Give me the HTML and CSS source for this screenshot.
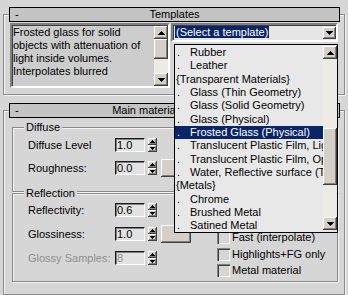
FILE: index.html
```html
<!DOCTYPE html>
<html lang="en">
<head>
<meta charset="utf-8">
<title>Templates</title>
<link rel="stylesheet" href="styles.css">
</head>
<body>
<div class="panel">
  <section class="rollout rollout-templates">
    <div class="rtitle"><span class="rminus">-</span><span class="rname">Templates</span><span></span></div>
    <div class="tpl-row">
      <div class="desc">
        <div class="desc-text">Frosted glass for solid<br>objects with attenuation of<br>light inside volumes.<br>Interpolates blurred</div>
        <div class="vscroll small">
          <div class="sbtn"><svg width="7" height="4" viewBox="0 0 7 4"><path d="M0 4H7V3H6V2H5V1H4V0H3V1H2V2H1V3H0Z"/></svg></div>
          <div class="sthumb thumb-small"></div>
          <div class="strack grow"></div>
          <div class="sbtn"><svg width="7" height="4" viewBox="0 0 7 4"><path d="M0 0H7V1H6V2H5V3H4V4H3V3H2V2H1V1H0Z"/></svg></div>
        </div>
      </div>
      <div class="combo">
        <span class="combo-sel">(Select a template)</span>
        <div class="cbtn"><svg width="7" height="4" viewBox="0 0 7 4"><path d="M0 0H7V1H6V2H5V3H4V4H3V3H2V2H1V1H0Z"/></svg></div>
        <div class="dropdown">
          <div class="dd-items">
            <div class="dd-item"><span class="dot">.</span>Rubber</div>
            <div class="dd-item"><span class="dot">.</span>Leather</div>
            <div class="dd-item cat">{Transparent Materials}</div>
            <div class="dd-item"><span class="dot">.</span>Glass (Thin Geometry)</div>
            <div class="dd-item"><span class="dot">.</span>Glass (Solid Geometry)</div>
            <div class="dd-item"><span class="dot">.</span>Glass (Physical)</div>
            <div class="dd-item sel"><span class="dot">.</span>Frosted Glass (Physical)</div>
            <div class="dd-item"><span class="dot">.</span>Translucent Plastic Film, Light Diffusion</div>
            <div class="dd-item"><span class="dot">.</span>Translucent Plastic Film, Opalescent</div>
            <div class="dd-item"><span class="dot">.</span>Water, Reflective surface (Thin geometry)</div>
            <div class="dd-item cat">{Metals}</div>
            <div class="dd-item"><span class="dot">.</span>Chrome</div>
            <div class="dd-item"><span class="dot">.</span>Brushed Metal</div>
            <div class="dd-item"><span class="dot">.</span>Satined Metal</div>
          </div>
          <div class="vscroll big">
            <div class="sbtn"><svg width="7" height="4" viewBox="0 0 7 4"><path d="M0 4H7V3H6V2H5V1H4V0H3V1H2V2H1V3H0Z"/></svg></div>
            <div class="strack track-top"></div>
            <div class="sthumb thumb-big"></div>
            <div class="strack grow"></div>
            <div class="sbtn"><svg width="7" height="4" viewBox="0 0 7 4"><path d="M0 0H7V1H6V2H5V3H4V4H3V3H2V2H1V1H0Z"/></svg></div>
          </div>
        </div>
      </div>
    </div>
  </section>

  <section class="rollout rollout-main">
    <div class="rtitle"><span class="rminus">-</span><span class="rname">Main material parameters</span><span></span></div>

    <div class="group group-diffuse">
      <div class="legend">Diffuse</div>
      <div class="prow first">
        <span class="plabel">Diffuse Level</span>
        <span class="pfield">1.0</span>
        <span class="parrows">
          <span class="sa"><svg width="5" height="3" viewBox="0 0 5 3"><path d="M0 3H5V2H4V1H3V0H2V1H1V2H0Z"/></svg></span>
          <span class="sa"><svg width="5" height="3" viewBox="0 0 5 3"><path d="M0 0H5V1H4V2H3V3H2V2H1V1H0Z"/></svg></span>
        </span>
      </div>
      <div class="prow">
        <span class="plabel">Roughness:</span>
        <span class="pfield">0.0</span>
        <span class="parrows">
          <span class="sa"><svg width="5" height="3" viewBox="0 0 5 3"><path d="M0 3H5V2H4V1H3V0H2V1H1V2H0Z"/></svg></span>
          <span class="sa"><svg width="5" height="3" viewBox="0 0 5 3"><path d="M0 0H5V1H4V2H3V3H2V2H1V1H0Z"/></svg></span>
        </span>
        <span class="pmap"></span>
      </div>
    </div>

    <div class="group group-reflection">
      <div class="legend">Reflection</div>
      <div class="gcols">
        <div class="gcol-left">
          <div class="prow first">
            <span class="plabel">Reflectivity:</span>
            <span class="pfield">0.6</span>
            <span class="parrows">
              <span class="sa"><svg width="5" height="3" viewBox="0 0 5 3"><path d="M0 3H5V2H4V1H3V0H2V1H1V2H0Z"/></svg></span>
              <span class="sa"><svg width="5" height="3" viewBox="0 0 5 3"><path d="M0 0H5V1H4V2H3V3H2V2H1V1H0Z"/></svg></span>
            </span>
          </div>
          <div class="prow">
            <span class="plabel">Glossiness:</span>
            <span class="pfield">1.0</span>
            <span class="parrows">
              <span class="sa"><svg width="5" height="3" viewBox="0 0 5 3"><path d="M0 3H5V2H4V1H3V0H2V1H1V2H0Z"/></svg></span>
              <span class="sa"><svg width="5" height="3" viewBox="0 0 5 3"><path d="M0 0H5V1H4V2H3V3H2V2H1V1H0Z"/></svg></span>
            </span>
            <span class="pmap"></span>
          </div>
          <div class="prow disabled">
            <span class="plabel">Glossy Samples:</span>
            <span class="pfield">8</span>
            <span class="parrows">
              <span class="sa"><svg width="5" height="3" viewBox="0 0 5 3"><path d="M0 3H5V2H4V1H3V0H2V1H1V2H0Z"/></svg></span>
              <span class="sa"><svg width="5" height="3" viewBox="0 0 5 3"><path d="M0 0H5V1H4V2H3V3H2V2H1V1H0Z"/></svg></span>
            </span>
          </div>
        </div>
        <div class="gcol-right">
          <div class="chk"><span class="box"></span>Fast (interpolate)</div>
          <div class="chk"><span class="box"></span>Highlights+FG only</div>
          <div class="chk"><span class="box"></span>Metal material</div>
        </div>
      </div>
    </div>
  </section>
</div>
</body>
</html>
```

FILE: styles.css
```css
* { box-sizing: border-box; }
html, body { margin: 0; padding: 0; }
body {
  width: 348px;
  height: 295px;
  overflow: hidden;
  background: #d6d6d6;
  font-family: "Liberation Sans", Arial, sans-serif;
  font-size: 11px;
  line-height: 13px;
  color: #000;
}
svg { display: block; shape-rendering: crispEdges; }
svg path { fill: #000; }

.panel { padding: 14px 3px 0 3px; }

.rollout {
  border: 1px solid #8a8a8a;
  box-shadow: inset 1px 1px 0 #f5f5f5, 1px 1px 0 #f5f5f5;
}
.rollout-templates { padding-bottom: 6px; }
.rollout-main { margin-top: 15px; padding-bottom: 12px; }

.rtitle {
  display: grid;
  grid-template-columns: 1fr auto 1fr;
  height: 15px;
  margin: -8px 4px 0 5px;
  padding: 0 5px;
  border: 1px solid #000;
  background: #c4c4c4;
  line-height: 13px;
}
.rminus { justify-self: start; }

/* Templates row */
.tpl-row {
  display: flex;
  align-items: flex-start;
  gap: 1px;
  margin-top: 1px;
  padding-left: 6px;
}
.desc {
  display: flex;
  width: 160px;
  height: 65px;
  border: 2px solid;
  border-color: #808080 #fff #fff #808080;
  box-shadow: inset 1px 1px 0 #404040;
  background: #cdcdcd;
}
.desc-text {
  flex: 1;
  padding: 1px 0 0 1px;
  line-height: 13px;
  overflow: hidden;
  white-space: nowrap;
}

.vscroll {
  display: flex;
  flex-direction: column;
  width: 14px;
}
.vscroll.small { padding-top: 1px; }
.vscroll.big { padding: 1px 0 2px 0; }
.sbtn, .sthumb, .sa, .pmap, .cbtn {
  background: #d4d0c8;
  box-shadow: inset -1px -1px 0 #404040, inset 1px 1px 0 #fff, inset -2px -2px 0 #808080;
}
.sbtn {
  height: 13px;
  display: flex;
  align-items: center;
  justify-content: center;
  flex: none;
}
.strack { background: #ecebe6; }
.grow { flex: 1; }
.thumb-small { height: 20px; flex: none; }
.track-top { height: 69px; flex: none; }
.thumb-big { height: 57px; flex: none; }

/* combo */
.combo {
  position: relative;
  display: flex;
  align-items: flex-start;
  width: 167px;
  height: 19px;
  border: 2px solid;
  border-color: #808080 #fff #fff #808080;
  box-shadow: inset 1px 1px 0 #404040;
  background: #e6e6e6;
}
.combo-sel {
  margin: 1px 0 0 2px;
  padding: 0 1px;
  height: 12px;
  line-height: 12px;
  background: #0a246a;
  color: #fff;
}
.cbtn {
  margin: 2px 0 0 auto;
  width: 13px;
  height: 12px;
  display: flex;
  align-items: center;
  justify-content: center;
}

.dropdown {
  position: absolute;
  left: 1px;
  top: 19px;
  z-index: 5;
  display: flex;
  width: 164px;
  height: 189px;
  border: 1px solid #000;
  background: #e8e8e8;
}
.dd-items {
  flex: 1;
  min-width: 0;
  overflow: hidden;
  padding-top: 1px;
}
.dd-item {
  height: 13.35px;
  line-height: 13.35px;
  white-space: nowrap;
  overflow: hidden;
  padding-left: 2px;
}
.dd-item.cat { padding-left: 1px; }
.dd-item.sel { background: #0a246a; color: #fff; }
.dot { display: inline-block; width: 13px; }

/* groups */
.group {
  border: 1px solid #8a8a8a;
  box-shadow: inset 1px 1px 0 #f5f5f5, 1px 1px 0 #f5f5f5;
  margin: 9px 6px 0 8px;
}
.group-diffuse { padding-bottom: 14px; }
.group-reflection { margin-top: 1px; padding-bottom: 2px; }
.legend {
  width: max-content;
  margin: -7px 0 0 11px;
  padding: 0 2px;
  background: #d6d6d6;
  line-height: 13px;
}

.prow {
  display: flex;
  align-items: center;
  height: 18px;
  margin-top: 5px;
  padding-left: 15px;
}
.group-diffuse .prow.first { margin-top: 2px; }
.gcol-left .prow { margin-top: 6px; }
.gcol-left .prow.first { margin-top: 1px; }
.plabel { width: 87px; flex: none; }
.pfield {
  width: 30px;
  height: 14px;
  flex: none;
  padding-left: 1px;
  line-height: 12px;
  border: 1px solid;
  border-color: #1a1a1a #fff #fff #1a1a1a;
  box-shadow: inset 1px 1px 0 #808080;
  background: #e2e2e2;
}
.parrows {
  display: flex;
  flex-direction: column;
  width: 9px;
  height: 14px;
  margin-left: 3px;
  flex: none;
}
.sa {
  flex: 1;
  display: flex;
  align-items: center;
  justify-content: center;
}
.pmap {
  width: 30px;
  height: 18px;
  margin-left: 4px;
  flex: none;
}
.disabled { color: #8e8e8e; }
.disabled .pfield { color: #8e8e8e; }

.gcols { display: flex; align-items: flex-start; }
.gcol-left { width: 204px; flex: none; }
.gcol-right { padding-top: 29.5px; }
.chk {
  display: flex;
  align-items: center;
  gap: 2px;
  height: 16.5px;
  white-space: nowrap;
}
.box {
  width: 13px;
  height: 13px;
  flex: none;
  background: #d6d6d6;
  box-shadow: inset 1px 1px 0 #808080, inset 2px 2px 0 #404040, inset -1px -1px 0 #fff, inset -2px -2px 0 #d4d0c8;
}
```
